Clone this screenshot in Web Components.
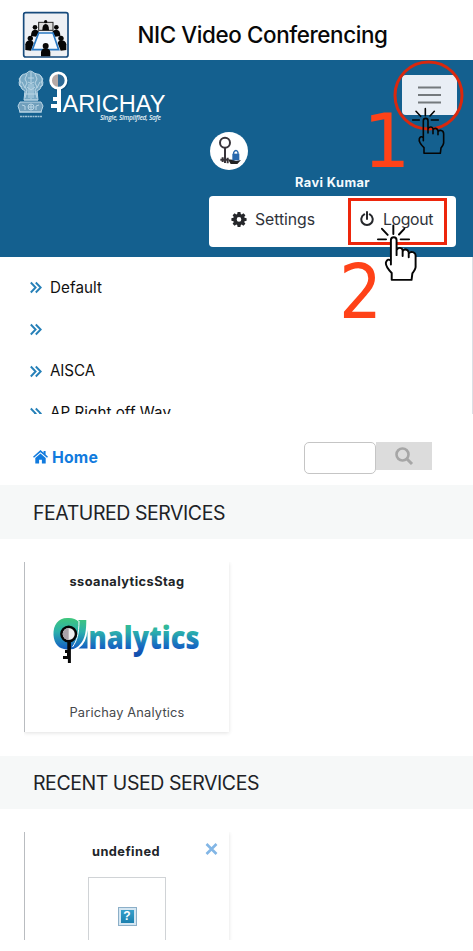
<!DOCTYPE html>
<html lang="en"><head><meta charset="utf-8"><title>NIC Video Conferencing</title>
<style>
html,body{margin:0;background:#fff}
body{width:473px;height:951px;overflow:hidden;font-family:Inter,"Liberation Sans",sans-serif;color:#212529}
</style></head><body>
<parichay-app></parichay-app>
<script>
const make=(name,html,ready)=>customElements.define(name,class extends HTMLElement{
  connectedCallback(){
    if(this.shadowRoot)return;
    this.attachShadow({mode:'open'}).innerHTML=html;
    if(ready)ready.call(this,this.shadowRoot);
  }
});

/* One line of text, tracked so that it fills the width given by "w". */
make('fit-text','<style>:host{display:inline-block;white-space:nowrap;line-height:20px}span{display:inline-block}</style><span><slot></slot></span>',function(r){
  const s=r.querySelector('span'),n=this.textContent.length,w=+this.getAttribute('w');
  this.style.width=w+'px';
  s.style.letterSpacing=((w-s.getBoundingClientRect().width)/n)+'px';
});

make('app-title',`<style>
:host{display:flex;height:60px;align-items:center;padding-left:22px;box-sizing:border-box}
svg{margin-top:9px}fit-text{font-size:22.400px;font-weight:500;color:#080808;margin:10px 0 0 67.500px;line-height:28px}
</style>
<svg width="48" height="48" viewBox="0 0 144 144"><rect x="5" y="5" width="133" height="133" rx="6" fill="#eef0f4" stroke="#164a7c" stroke-width="5"/>
<rect x="50" y="34" width="43" height="24" fill="#ddd" stroke="#222" stroke-width="3"/><g fill="#060606"><circle cx="71" cy="32" r="5"/><path d="M61 58q0-19 10-19t10 19z"/>
<circle cx="39" cy="49" r="7"/><path d="M27 75q0-19 12-19 10 0 12 8L42 77z"/><circle cx="103" cy="49" r="7"/><path d="M115 75q0-19-12-19-10 0-12 8l9 13z"/>
<circle cx="25" cy="82" r="8"/><path d="M10 117V100q2-12 15-12 8 0 10 8l-8 23z"/><circle cx="117" cy="82" r="8"/><path d="M133 117V100q-2-12-16-12-8 0-10 8l9 23z"/></g>
<path d="M50 66h43l17 50H31z" fill="#f5faff" stroke="#2879c4" stroke-width="5"/><g fill="#060606"><circle cx="71" cy="105" r="9"/><path d="M57 136v-13q2-11 14-11t14 11v13z"/></g></svg>
<fit-text w="250">NIC Video Conferencing</fit-text>`);

make('brand-logo',`<style>:host{display:block}svg{display:block;overflow:visible}</style>
<svg width="156" height="56" viewBox="14 66 156 56">
<g fill="none" stroke="#b9d5e5" stroke-width="1"><path fill="#79a9c4" d="M27 73q3-4 7 0l3 1q4 0 5 5l1 4-3 6-3 2 1 9H24l1-9-3-2-3-6 1-4q1-5 5-5z"/>
<path fill="#709fbc" d="M20 102h21l2 4-2 6H20l-2-6z"/><path d="M22 75l-3 4 2 3-2 3 3 2M40 75l3 4-2 3 2 3-3 2M27 74l-2 5 2 4-2 4 2 3-2 8M35 74l2 5-2 4 2 4-2 3 2 8M28 78h6M28 82q3 3 6 0M27 87l4 3 4-3M29 84v14M33 84v14M31 72v27M22 82l3 6M40 82l-3 6M24 94h14M24 100h14"/>
<circle cx="31" cy="107" r="3"/><path d="M31 104v6M28 107h6M22 105l3 1v4M39 105l-3 1v4M19 112h23"/></g>
<path d="M20 116.500h22" stroke="#9bbfd4" stroke-width="1.500" stroke-dasharray="2 .5"/>
<circle cx="59" cy="81.500" r="8" fill="none" stroke="#0b416b" opacity=".5" stroke-width="3"/>
<circle cx="58" cy="80.500" r="7" fill="#2f6a95"/><path d="M58 73v15a7.500 7.500 0 010-15z" fill="#b6a9a6"/>
<circle cx="58.300" cy="80.500" r="7.700" fill="none" stroke="#fff" stroke-width="2.700"/>
<path fill="#fff" d="M57 88h4v24h-4v-4h-6v-4h6v-3h-4v-4h4z"/>
<text x="62.500" y="112" font-family="Liberation Sans" font-size="24.500" fill="#fff" textLength="103" lengthAdjust="spacingAndGlyphs">ARICHAY</text>
<text x="100" y="119.500" font-family="Open Sans" font-style="italic" font-weight="600" font-size="6.500" fill="#e4eff5" textLength="61">Single, Simplified, Safe</text></svg>`);

make('site-banner',`<style>
:host{display:grid;grid-template-rows:56px 56px 20px 52px 1fr;height:197px;box-sizing:border-box;padding-top:6px;background:#14608f;color:#fff}
.top{display:flex;justify-content:space-between;padding:0 16px 0 14px}
.burger{width:55px;height:40px;margin-top:9px;background:#e9eef5;border-radius:4px;display:grid;place-items:center}
.avatar{width:38px;height:38px;border-radius:50%;background:#fff;margin:10px 0 0 210px}
.name{padding-left:295px;margin-top:-7px}.name fit-text{font-size:12.800px;font-weight:650;color:#f4fafd}
.menu{height:51px;width:247px;margin:-2px 0 0 209px;background:#fff;border-radius:4px;display:flex;align-items:center;box-sizing:border-box;padding-left:22px;color:#30333a}
.menu fit-text{font-size:15.800px;margin:-4px 0 0 8px}.menu svg{margin-top:-5px}.p{margin-left:45px}
</style>
<div class="top"><brand-logo></brand-logo><div class="burger"><svg width="24" height="18"><path d="M0 1.500h23M0 9h23M0 16.500h23" stroke="#74797d" stroke-width="1.800"/></svg></div></div>
<div class="avatar"><svg width="38" height="38" viewBox="0 0 114 114"><circle cx="45" cy="32" r="15" fill="#fff" stroke="#38343a" stroke-width="6"/><path d="M45 47v46M31 83h25M38 76v14M53 77v17" stroke="#38343a" stroke-width="6"/><path d="M54 82l14 1 10 4 15-3-11 12H62z" fill="#222"/><rect x="67" y="65" width="21" height="20" fill="#2868ad"/><path d="M71 66v-5q7-11 13 0v5" fill="none" stroke="#2868ad" stroke-width="4"/></svg></div>
<div class="name"><fit-text w="75">Ravi Kumar</fit-text></div>
<div class="menu"><svg width="16" height="16" viewBox="0 0 16 16"><path fill="#25272b" fill-rule="evenodd" d="M6.600 1h2.800l.4 2 .9.400 1.700-1.200 2 2-1.200 1.700.4.900 2 .4v2.600l-2 .4-.4.900 1.200 1.700-2 2-1.700-1.200-.9.400-.4 2H6.600l-.4-2-.9-.4-1.700 1.200-2-2 1.200-1.700-.4-.9-2-.4V7.200l2-.4.4-.9L1.600 4.200l2-2 1.700 1.200.9-.4zM8 6.100a2.300 2.300 0 100 4.600 2.300 2.300 0 000-4.600z"/></svg><fit-text w="60">Settings</fit-text>
<svg class="p" width="14" height="16" viewBox="0 0 14 16"><path d="M4.200 3.400a5.700 5.700 0 105.600 0M7 1v7" fill="none" stroke="#25272b" stroke-width="2" stroke-linecap="round"/></svg><fit-text w="50" style="margin-left:9px">Logout</fit-text></div>`);

make('nav-item',`<style>:host{display:flex;height:41.800px;align-items:center;font-size:15.200px;color:#111}svg{margin:0 8px 0 30px;flex:none}</style>
<svg width="12" height="13" viewBox="0 0 12 13"><path d="M.8 1.500L5.600 6.500.8 11.500M5.800 1.500l4.900 5-4.900 5" fill="none" stroke="#2680b8" stroke-width="1.900"/></svg><slot></slot>`);
make('nav-list',`<style>:host{display:block;height:157px;margin-bottom:1px;box-sizing:border-box;padding-top:9.800px;overflow:hidden;border-right:1px solid #dcdfe5}</style><slot></slot>`);

make('search-bar',`<style>
:host{display:flex;height:70px;box-sizing:border-box;padding:27px 41px 0 33px;align-items:flex-start;justify-content:space-between}
a{display:flex;align-items:center;color:#117bde;gap:4px;margin-top:5px;font-size:15.800px;font-weight:650}a fit-text{margin-top:1px}a svg{margin-top:-1px}
.s{display:flex}.i{box-sizing:border-box;width:72px;height:32px;border:1px solid #c5c5c5;border-radius:5px}.b{width:56px;height:28px;background:#dcdcdc;display:grid;place-items:center}
</style><a><svg width="15" height="14" viewBox="0 0 15 14"><path fill="#117bde" d="M7.500 0L10.600 2.700V1h2v3.500L15 6.700l-1 1-6.500-5.500L1 7.700l-1-1zM2.300 8l5.200-4.400L12.700 8v5.500H8.900V9.700H6.100v3.800H2.300z"/></svg><fit-text w="46">Home</fit-text></a>
<div class="s"><div class="i"></div><div class="b"><svg width="20" height="20" viewBox="0 0 20 20"><circle cx="8.500" cy="8.500" r="6" fill="none" stroke="#a6a6a6" stroke-width="2.600"/><path d="M13 13l5 5" stroke="#a6a6a6" stroke-width="3"/></svg></div></div>`);

make('section-head',`<style>:host{display:flex;align-items:center;padding:1px 0 0 33px;height:54px;box-sizing:border-box;background:#f6f8f8;font-size:19.500px;color:#202226}</style><slot></slot>`);
make('service-card',`<style>:host{display:flex;position:relative;flex-direction:column;align-items:center;box-sizing:border-box;width:205px;margin:23px 0 0 24px;height:170px;border-left:1px solid #b9bcc0;box-shadow:0 1px 4px #0000001f;clip-path:inset(0 -5px -5px 0);padding-top:10px}
.x{position:absolute;right:11px;top:11px}:host(:not([closable])) .x{display:none}</style><svg class="x" width="13" height="12"><path d="M1.500 1l10 10M11.500 1l-10 10" stroke="#82b6e6" stroke-width="2.600"/></svg><slot></slot>`);

make('analytics-logo',`<style>:host{display:block;height:62px;margin:21px 0 0 0}svg{display:block;overflow:visible}</style>
<svg width="152" height="52" viewBox="51 614 152 52"><defs><linearGradient id="g" gradientUnits="userSpaceOnUse" x1="0" y1="618" x2="0" y2="655"><stop stop-color="#40c878"/><stop offset=".4" stop-color="#2bb0ac"/><stop offset=".8" stop-color="#1768c2"/><stop offset="1" stop-color="#124fae"/></linearGradient></defs>
<path fill="url(#g)" d="M69 619C59 618 53 625 53.500 636 54 646 61 652 70 650 76 648 79 640 79 631V623Q75 619 69 619z"/>
<path fill="url(#g)" d="M78.500 621h7.800c0 10-1 19-6 24-3 4-7 6-12 5 8-5 10-17 10.200-29z"/><path d="M79 622c0 12-2 20-6.500 26" fill="none" stroke="#fff" stroke-width="1"/>
<path fill="url(#g)" d="M87.500 631v18.500h-9q8-5 9-18.500z"/>
<text x="88.500" y="650" font-family="Open Sans" font-weight="800" font-size="31" fill="url(#g)" textLength="111" lengthAdjust="spacingAndGlyphs">nalytics</text>
<circle cx="68.700" cy="635" r="7.300" fill="#eee" stroke="#050505" stroke-width="2.500"/><path d="M68.700 629v12a6 6 0 010-12z" fill="#aaa3aa"/><path fill="#080808" d="M67.300 642h3.600v22h-3v-4H63v-3h4v-3h-2v-3h2.300z"/></svg>`);

make('broken-image',`<style>:host{display:block;margin-top:15px;width:78px;height:78px;border:1px solid #d0d3d6;box-sizing:border-box;padding:29px 0 0 29px;margin-right:1px}
i{display:block;box-sizing:border-box;width:19px;height:19px;border:1px solid #8cafc8;background:linear-gradient(#3aa5d0,#187baa);box-shadow:inset 0 0 0 2px #d4e6f2;color:#fff;font:bold 12px/17px "Liberation Sans";text-align:center}</style><i>?</i>`);

make('tap-hints',`<style>:host{position:absolute;inset:0;width:473px;height:951px;pointer-events:none}svg{display:block}</style>
<svg width="473" height="951"><defs><g id="hand" fill="none" stroke="#050505" stroke-width="4.800" stroke-linecap="round" stroke-linejoin="round">
<path stroke="none" fill="#fff" fill-opacity="var(--f,0)" d="M220 210q7-9 14 0v21h13l17 7 16 8v34l-9 30h-48l-1-18-14-20 12-4z"/>
<path d="M220 272V212Q220 205 227 205T234 212V249M234 237q2-6 8-6t7 6v14M249 240q1-5 7-5t8 7v12M264 246q1-5 7-5 10 1 10 10v27q0 5-8 16l-2 16h-49v-17q-17-17-14-27 4-10 12-3M226 176v21M198 184l14 15M253 184l-13 14M188 210h20M244 210h21"/></g></defs>
<circle cx="428.500" cy="95.500" r="33.500" fill="none" stroke="#d9280e" stroke-width="3"/><rect x="349.500" y="199.500" width="96" height="44" fill="none" stroke="#ed260c" stroke-width="3"/>
<g font-family="DejaVu Sans" font-size="74.500" fill="#ff4218"><text x="363" y="167">1</text><text x="339" y="318" textLength="43" lengthAdjust="spacingAndGlyphs">2</text></g>
<use href="#hand" transform="translate(350 50) scale(.3333)"/><use href="#hand" style="--f:1" transform="translate(301.800 154.300) scale(.405)"/></svg>`);

make('parichay-app',`<style>:host{display:block;position:relative;height:951px;overflow:hidden}.c{height:217px;display:flow-root}.r{height:131px;display:flow-root;overflow:hidden}
.t{font-size:12.800px;font-weight:650}.d{font-size:12.800px;color:#45484c}.undef{margin-right:2px}</style>
<app-title></app-title><site-banner></site-banner>
<nav-list><nav-item><fit-text w="52">Default</fit-text></nav-item><nav-item></nav-item><nav-item><fit-text w="45">AISCA</fit-text></nav-item><nav-item><fit-text w="121">AP Right off Way</fit-text></nav-item></nav-list>
<search-bar></search-bar><section-head><fit-text w="192">FEATURED SERVICES</fit-text></section-head>
<div class="c"><service-card><fit-text class="t" w="115">ssoanalyticsStag</fit-text><analytics-logo></analytics-logo><fit-text class="d" w="115" style="margin-top:28px">Parichay Analytics</fit-text></service-card></div>
<section-head style="height:53px;padding-top:0"><fit-text w="226">RECENT USED SERVICES</fit-text></section-head>
<div class="r"><service-card closable><fit-text class="t undef" w="68">undefined</fit-text><broken-image></broken-image></service-card></div>
<tap-hints></tap-hints>`);
</script></body></html>
